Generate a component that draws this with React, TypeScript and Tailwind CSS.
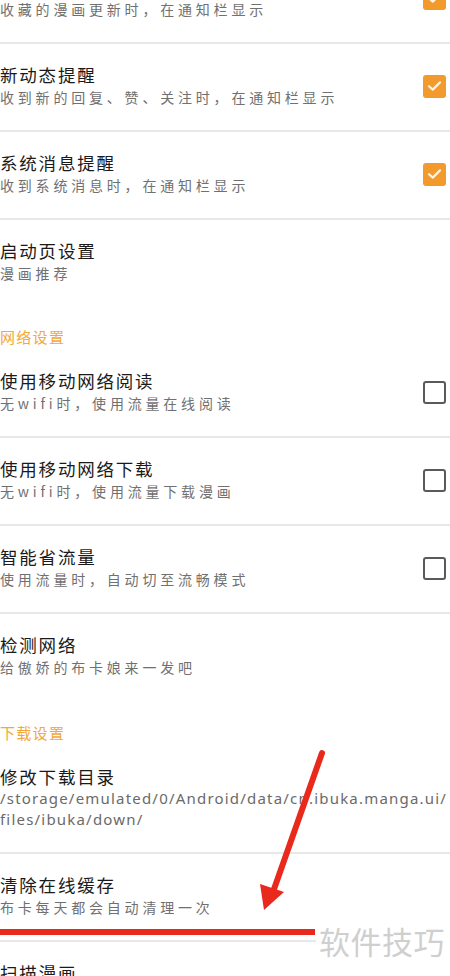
import React from "react";

type Row = {
  title: string;
  sub?: string;
  lines?: string[];
  check?: "on" | "off";
};

const CJK = "font-['Noto_Sans_CJK_SC','Noto_Sans',sans-serif]";

function CheckBox({ on }: { on: boolean }) {
  if (on) {
    return (
      <div className="w-[23px] h-[23px] rounded-[3px] bg-[#f39a2c] flex items-center justify-center shrink-0">
        <svg width="15" height="12" viewBox="0 0 15 12" fill="none">
          <path d="M2 6.2 L5.8 9.6 L13 2.4" stroke="#fff3dc" strokeWidth="2.2" strokeLinecap="round" strokeLinejoin="round" />
        </svg>
      </div>
    );
  }
  return <div className="w-[23px] h-[23px] rounded-[3px] border-2 border-[#5a5a5a] shrink-0" />;
}

function SettingRow({ row, divider = true }: { row: Row; divider?: boolean }) {
  return (
    <div className={divider ? "border-b-2 border-[#e8e8e8]" : ""}>
      <div className="flex items-center pt-[20px] pb-[22px] pr-[4px]">
        <div className="flex-1">
          <div className={`${CJK} text-[17.5px] leading-[22px] tracking-[1.8px] text-[#1a1a1a]`}>{row.title}</div>
          {row.sub && (
            <div className={`${CJK} text-[14px] leading-[22px] tracking-[3.8px] text-[#707070]`}>{row.sub}</div>
          )}
          {row.lines &&
            row.lines.map((l) => (
              <div key={l} className="font-['Noto_Sans',sans-serif] text-[15px] leading-[21px] tracking-[1.2px] text-[#6a6a6a] whitespace-nowrap">
                {l}
              </div>
            ))}
        </div>
        {row.check && <CheckBox on={row.check === "on"} />}
      </div>
    </div>
  );
}

function SectionHeader({ label, top }: { label: string; top: string }) {
  return (
    <div className={`${top} pb-[2px]`}>
      <div className={`${CJK} text-[15px] leading-[22px] tracking-[1.3px] text-[#f2a83a]`}>{label}</div>
    </div>
  );
}

export default function App() {
  return (
    <div className="relative w-[450px] h-[976px] overflow-hidden bg-white">
      <div className="-mt-[44px]">
        <SettingRow row={{ title: "漫画更新提醒", sub: "收藏的漫画更新时，在通知栏显示", check: "on" }} />
        <SettingRow row={{ title: "新动态提醒", sub: "收到新的回复、赞、关注时，在通知栏显示", check: "on" }} />
        <SettingRow row={{ title: "系统消息提醒", sub: "收到系统消息时，在通知栏显示", check: "on" }} />
        <SettingRow row={{ title: "启动页设置", sub: "漫画推荐" }} divider={false} />

        <SectionHeader label="网络设置" top="pt-[20px]" />
        <SettingRow row={{ title: "使用移动网络阅读", sub: "无wifi时，使用流量在线阅读", check: "off" }} />
        <SettingRow row={{ title: "使用移动网络下载", sub: "无wifi时，使用流量下载漫画", check: "off" }} />
        <SettingRow row={{ title: "智能省流量", sub: "使用流量时，自动切至流畅模式", check: "off" }} />
        <SettingRow row={{ title: "检测网络", sub: "给傲娇的布卡娘来一发吧" }} divider={false} />

        <SectionHeader label="下载设置" top="pt-[22px]" />
        <SettingRow
          row={{
            title: "修改下载目录",
            lines: ["/storage/emulated/0/Android/data/cn.ibuka.manga.ui/", "files/ibuka/down/"],
          }}
        />
        <SettingRow row={{ title: "清除在线缓存", sub: "布卡每天都会自动清理一次" }} />
        <SettingRow row={{ title: "扫描漫画", sub: "扫描本地漫画文件" }} />
      </div>

      {/* annotation: red underline */}
      <div className="absolute left-0 top-[929px] w-[315px] h-[6px] bg-[#e8291c]" />

      {/* annotation: arrow */}
      <svg className="absolute left-0 top-0 pointer-events-none" width="450" height="976">
        <line x1="322" y1="753" x2="273" y2="892" stroke="#e8291c" strokeWidth="6" strokeLinecap="round" />
        <polygon points="264,910 260,884 284,892" fill="#e8291c" />
      </svg>

      {/* watermark */}
      <div className="absolute left-[316px] top-[918px] w-[134px] h-[44px] bg-white flex items-center">
        <span className={`${CJK} text-[31px] leading-none tracking-[0.5px] text-[#cfcfcf] pl-[3px]`}>软件技巧</span>
      </div>
    </div>
  );
}
